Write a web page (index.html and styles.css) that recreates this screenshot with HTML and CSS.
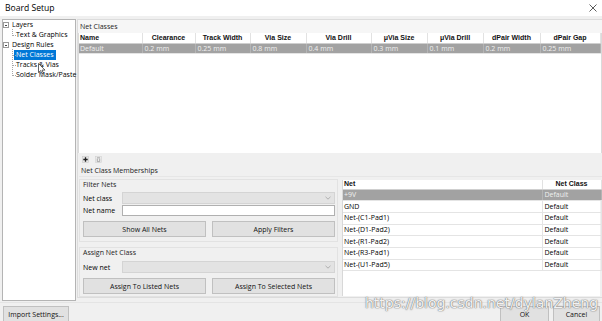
FILE: index.html
```html
<!DOCTYPE html>
<html>
<head>
<meta charset="utf-8">
<title>Board Setup</title>
<link rel="stylesheet" href="styles.css">
</head>
<body>
<div class="window">
  <div class="titlebar">
    <span class="title">Board Setup</span>
    <svg class="close" width="8" height="8" viewBox="0 0 8 8"><path d="M0.5 0.5L7.5 7.5M7.5 0.5L0.5 7.5" stroke="#333" stroke-width="0.8"/></svg>
  </div>

  <div class="content">
    <div class="tree">
      <div class="node root"><span class="toggle"></span><span class="label">Layers</span></div>
      <div class="node child last"><span class="label">Text &amp; Graphics</span></div>
      <div class="node root"><span class="toggle"></span><span class="label">Design Rules</span></div>
      <div class="node child"><span class="label selected">Net Classes</span></div>
      <div class="node child"><span class="label">Tracks &amp; Vias</span></div>
      <div class="node child last"><span class="label">Solder Mask/Paste</span></div>
    </div>

    <div class="main">
      <div class="section-head">Net Classes</div>
      <div class="nc-table">
        <table class="grid">
          <colgroup>
            <col class="c-name"><col class="c-clear"><col class="c-track"><col class="c-vsize"><col class="c-vdrill"><col class="c-uvsize"><col class="c-uvdrill"><col class="c-dpw"><col class="c-dpg">
          </colgroup>
          <thead>
            <tr><th class="left">Name</th><th>Clearance</th><th>Track Width</th><th>Via Size</th><th>Via Drill</th><th>μVia Size</th><th>μVia Drill</th><th>dPair Width</th><th>dPair Gap</th></tr>
          </thead>
          <tbody>
            <tr class="sel"><td>Default</td><td>0.2 mm</td><td>0.25 mm</td><td>0.8 mm</td><td>0.4 mm</td><td>0.3 mm</td><td>0.1 mm</td><td>0.2 mm</td><td>0.25 mm</td></tr>
          </tbody>
        </table>
      </div>
      <div class="toolbar">
        <svg width="7" height="7" viewBox="0 0 7 7"><rect x="0.5" y="0.5" width="6" height="6" fill="#e8e8e8" stroke="#c8c8c8" stroke-width="0.6"/><path d="M3.5 1.3V5.7M1.3 3.5H5.7" stroke="#222" stroke-width="1.3"/></svg>
        <svg width="7" height="7" viewBox="0 0 7 7"><rect x="0.5" y="0.5" width="6" height="6" fill="#ececec" stroke="#d0d0d0" stroke-width="0.6"/><path d="M2 1.8H5M2.3 2.6V5.6H4.7V2.6" fill="none" stroke="#9a9a9a" stroke-width="0.8"/></svg>
      </div>
      <div class="section-head ncm">Net Class Memberships</div>
      <div class="ncm-body">
        <div class="ncm-left">
          <div class="group filter">
            <div class="group-title">Filter Nets</div>
            <div class="field">
              <span class="field-label">Net class</span>
              <div class="combo"><svg width="6" height="4" viewBox="0 0 6 4"><path d="M0.5 0.8L3 3.2L5.5 0.8" fill="none" stroke="#999" stroke-width="0.7"/></svg></div>
            </div>
            <div class="field second">
              <span class="field-label">Net name</span>
              <div class="textbox"></div>
            </div>
            <div class="btn-row">
              <button class="btn">Show All Nets</button>
              <button class="btn">Apply Filters</button>
            </div>
          </div>
          <div class="group assign">
            <div class="group-title">Assign Net Class</div>
            <div class="field">
              <span class="field-label">New net</span>
              <div class="combo"><svg width="6" height="4" viewBox="0 0 6 4"><path d="M0.5 0.8L3 3.2L5.5 0.8" fill="none" stroke="#999" stroke-width="0.7"/></svg></div>
            </div>
            <div class="btn-row">
              <button class="btn">Assign To Listed Nets</button>
              <button class="btn">Assign To Selected Nets</button>
            </div>
          </div>
        </div>
        <div class="net-table">
          <table class="grid nets">
            <colgroup><col class="c-net"><col class="c-netclass"></colgroup>
            <thead><tr><th class="left">Net</th><th>Net Class</th></tr></thead>
            <tbody>
              <tr class="sel"><td>+9V</td><td>Default</td></tr>
              <tr><td>GND</td><td>Default</td></tr>
              <tr><td>Net-(C1-Pad1)</td><td>Default</td></tr>
              <tr><td>Net-(D1-Pad2)</td><td>Default</td></tr>
              <tr><td>Net-(R1-Pad2)</td><td>Default</td></tr>
              <tr><td>Net-(R3-Pad1)</td><td>Default</td></tr>
              <tr><td>Net-(U1-Pad5)</td><td>Default</td></tr>
            </tbody>
          </table>
        </div>
      </div>
    </div>
  </div>

  <div class="footer">
    <button class="btn import">Import Settings...</button>
    <div class="spacer"></div>
    <button class="btn ok">OK</button>
    <button class="btn cancel">Cancel</button>
  </div>

  <svg class="cursor" width="8" height="12" viewBox="0 0 8 12"><path d="M0.5 0.5V9.5L2.6 7.6L4 10.8L5.4 10.2L4 7.1H7Z" fill="#fff" stroke="#222" stroke-width="0.7" stroke-linejoin="round"/></svg>
  <div class="watermark">https://blog.csdn.net/dylanZheng</div>
</div>
</body>
</html>
```

FILE: styles.css
```css
* { box-sizing: border-box; }
html, body { margin: 0; padding: 0; }
body {
  width: 602px;
  height: 321px;
  overflow: hidden;
  background: #f0f0f0;
  font-family: "Open Sans", "Noto Sans", sans-serif;
  font-size: 7px;
  color: #000;
}
.window {
  position: relative;
  width: 602px;
  height: 321px;
  display: flex;
  flex-direction: column;
}

/* title bar */
.titlebar {
  height: 16px;
  flex: none;
  background: #fff;
  display: flex;
  align-items: center;
  justify-content: space-between;
  padding: 0 5px 1px 5px;
}
.title { font-size: 8.6px; line-height: 10px; }

/* content */
.content {
  flex: none;
  height: 286px;
  display: flex;
  gap: 1px;
  padding: 3px 1px 0 2px;
}

/* tree */
.tree {
  width: 74px;
  height: 282px;
  flex: none;
  background: #fff;
  border: 1px solid #b4b4b4;
  line-height: 10px;
}
.node {
  position: relative;
  height: 10px;
  display: flex;
  align-items: center;
  white-space: nowrap;
}
.node.root { padding-left: 0; }
.toggle {
  position: relative;
  width: 6px;
  height: 6px;
  border: 1px solid #9a9a9a;
  background: #fff;
  margin-right: 1px;
}
.toggle::after {
  content: "";
  position: absolute;
  left: 1px;
  top: 1.5px;
  width: 2px;
  height: 1px;
  background: #444;
}
.node.child { padding-left: 11px; }
.node.child::before {
  content: "";
  position: absolute;
  left: 9px;
  top: -1px;
  width: 3px;
  height: 6px;
  border-left: 1px dotted #a8a8a8;
  border-bottom: 1px dotted #a8a8a8;
}
.node.child:not(.last)::after {
  content: "";
  position: absolute;
  left: 9px;
  top: 5px;
  height: 5px;
  border-left: 1px dotted #a8a8a8;
}
.label { padding: 0 2px; height: 10px; line-height: 10px; }
.label.selected { background: #0078d7; color: #fff; }

/* main panel */
.main {
  flex: 1;
  height: 279px;
  border: 1px solid #dcdcdc;
  display: flex;
  flex-direction: column;
}
.section-head {
  height: 13px;
  flex: none;
  padding: 0 0 0 2px;
  line-height: 13px;
  color: #222;
  background: #f6f6f6;
}
.section-head.ncm {
  background: transparent;
  height: 12px;
  line-height: 12px;
  border-bottom: 1px solid #e6e6e6;
  margin-left: 1px;
}
.nc-table {
  height: 120px;
  flex: none;
  background: #fff;
  border-left: 1px solid #dadada;
  border-right: 1px solid #dadada;
}
.toolbar {
  height: 12px;
  flex: none;
  display: flex;
  align-items: center;
  gap: 6px;
  padding-left: 4px;
}

/* grids */
.grid {
  width: 100%;
  border-collapse: collapse;
  table-layout: fixed;
}
.grid th {
  height: 10px;
  padding: 0 2px;
  font-family: "Liberation Sans", Arial, sans-serif;
  font-weight: bold;
  font-size: 7px;
  line-height: 9px;
  text-align: center;
  color: #111;
  background: #fff;
  border-right: 1px solid #e2e2e2;
  border-bottom: 1px solid #cfcfcf;
  white-space: nowrap;
}
.grid th.left { text-align: left; padding-left: 1px; }
.grid td {
  height: 10px;
  padding: 0 2px;
  line-height: 9px;
  white-space: nowrap;
  border-right: 1px solid #e4e4e4;
  border-bottom: 1px solid #e4e4e4;
}
.grid td:first-child { padding-left: 1px; }
.grid tr.sel td {
  background: #a2a2a2;
  color: #f0f0f0;
  border-right-color: #b4b4b4;
}
.c-name { width: 63px; }
.c-clear { width: 53px; }
.c-track { width: 55px; }
.c-vsize { width: 56px; }
.c-vdrill { width: 65px; }
.c-uvsize { width: 56px; }
.c-uvdrill { width: 56px; }
.c-dpw { width: 57px; }
.c-dpg { width: 60px; }

/* memberships */
.ncm-body {
  flex: 1;
  display: flex;
  gap: 4px;
  padding-left: 1px;
}
.ncm-left {
  width: 259px;
  flex: none;
  display: flex;
  flex-direction: column;
  gap: 5px;
  padding-top: 2px;
}
.group {
  border: 1px solid #e2e2e2;
  padding: 0 2px 0 3px;
}
.group.filter { height: 63px; }
.group.assign { height: 50px; }
.group-title {
  height: 10px;
  line-height: 10px;
  color: #222;
}
.field {
  display: flex;
  align-items: center;
  height: 12px;
  margin-top: 2px;
}
.field.second { margin-top: 1px; height: 11px; }
.group.assign .field { margin-top: 3px; }
.field-label { width: 39px; flex: none; }
.combo {
  flex: 1;
  height: 12px;
  background: #e3e3e3;
  border: 1px solid #d4d4d4;
  display: flex;
  align-items: center;
  justify-content: flex-end;
  padding-right: 3px;
}
.textbox {
  flex: 1;
  height: 11px;
  background: #fff;
  border: 1px solid #b0b0b0;
}
.btn-row {
  display: flex;
  gap: 6px;
  margin-top: 5px;
}
.btn {
  flex: 1;
  height: 16px;
  padding: 0;
  margin: 0;
  font-family: "Open Sans", "Noto Sans", sans-serif;
  font-size: 7px;
  color: #111;
  background: #e1e1e1;
  border: 1px solid #c0c0c0;
  border-radius: 0;
}
.net-table {
  width: 258px;
  flex: none;
  height: 116px;
  margin-top: 3px;
  background: #fff;
  border-left: 1px solid #d8d8d8;
}
.grid.nets th { height: 9px; line-height: 8px; }
.grid.nets td { height: 11.7px; line-height: 10px; }
.c-net { width: 199px; }
.c-netclass { width: 59px; }

/* footer */
.footer {
  flex: none;
  height: 19px;
  border-top: 1px solid #e4e4e4;
  display: flex;
  gap: 4px;
  padding: 3px 2px 0 3px;
}
.footer .btn { flex: none; height: 17px; }
.btn.import { width: 66px; }
.btn.ok { width: 49px; }
.btn.cancel { width: 47px; }
.spacer { flex: 1; }

/* overlays */
.cursor {
  position: absolute;
  left: 38px;
  top: 63px;
}
.watermark {
  position: absolute;
  left: 365px;
  top: 295px;
  font-family: "DejaVu Sans", sans-serif;
  font-size: 14px;
  line-height: 16px;
  color: rgba(255, 255, 255, 0.92);
  text-shadow: 0 0 1px rgba(110, 110, 110, 1), 0 0 1px rgba(110, 110, 110, 0.8), 0 0 2px rgba(150, 150, 150, 0.5);
  white-space: nowrap;
}
```
